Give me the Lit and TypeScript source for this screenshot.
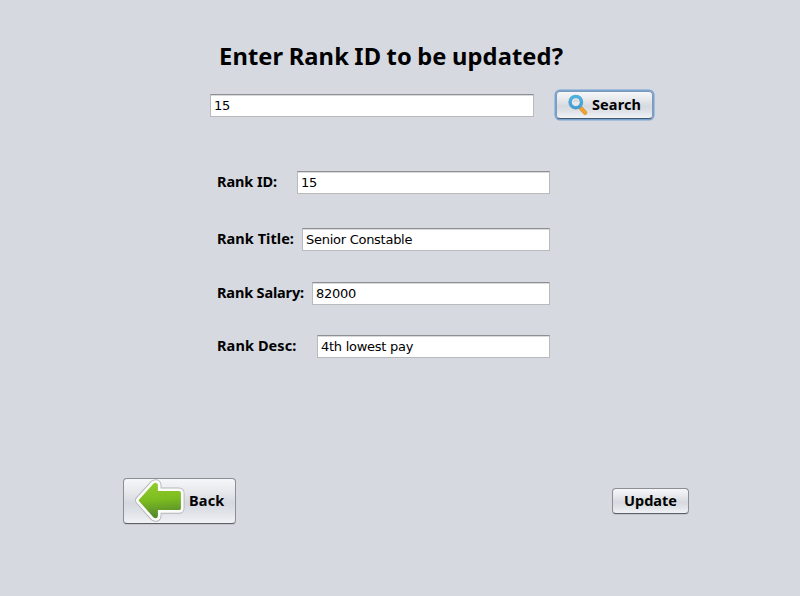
import { LitElement, html, css } from "lit";
import { customElement, property } from "lit/decorators.js";

const searchIcon = html`<svg class="icon" width="22" height="22" viewBox="0 0 22 22">
  <defs>
    <linearGradient id="ring" x1="0" y1="0" x2="0" y2="1">
      <stop offset="0" stop-color="#46b4e6" /><stop offset="1" stop-color="#3a9fd6" />
    </linearGradient>
  </defs>
  <path d="M13.8 14 L18.2 18.8" stroke="#c79350" stroke-width="4.2" stroke-linecap="round" />
  <path d="M13.8 14 L18.2 18.8" stroke="#f2a32a" stroke-width="3.3" stroke-linecap="round" />
  <path d="M12.2 12.3 L13.7 13.9" stroke="#8c8f94" stroke-width="2.6" />
  <circle cx="8.8" cy="8.1" r="5.7" fill="#e6e8ec" stroke="#8fa4b2" stroke-width="3.5" />
  <circle cx="8.8" cy="8.1" r="5.7" fill="none" stroke="url(#ring)" stroke-width="2.8" />
  <path d="M6.2 7.7 Q8.8 5.2 11.4 7.7" stroke="#cdd0d5" stroke-width="1.2" fill="none" />
</svg>`;

const arrow = "M4.6 21.3 L18.8 5.6 Q21.8 3.6 22 6.4 L22 13 L44 13 Q45 13 45 14 L45 29.2 Q45 30.2 44 30.2 L22 30.2 L22 36.6 Q21.8 39.4 18.8 37.4 Z";

const backIcon = html`<svg class="icon" width="50" height="44" viewBox="0 0 50 44">
  <defs>
    <linearGradient id="leaf" x1="0" y1="0" x2="0.1" y2="1">
      <stop offset="0" stop-color="#92cb2c" /><stop offset="0.5" stop-color="#7ebd20" /><stop offset="1" stop-color="#55892c" />
    </linearGradient>
  </defs>
  <g stroke-linejoin="round">
    <path d=${arrow} fill="#b4b6b8" stroke="#b4b6b8" stroke-width="9" />
    <path d=${arrow} fill="#fbfcfa" stroke="#fbfcfa" stroke-width="7.2" />
    <path d=${arrow} fill="url(#leaf)" stroke="url(#leaf)" stroke-width="1.8" />
  </g>
</svg>`;

@customElement("text-box")
class TextBox extends LitElement {
  @property() value = "";
  static styles = css`
    :host { display: block; height: 23px; }
    .box {
      box-sizing: border-box; width: 100%; height: 23px; padding: 0 3px;
      border: 1px solid #b9babc; border-top-color: #8e8f91; background: #fff;
      box-shadow: inset 0 1px 0 #d9dadc; outline: none; border-radius: 0;
      font: 13px/21px "DejaVu Sans", sans-serif; letter-spacing: -0.27px; color: #000; display: block;
    }
  `;
  render() {
    return html`<input class="box" .value=${this.value} />`;
  }
}

@customElement("app-root")
class AppRoot extends LitElement {
  static styles = css`
    :host {
      display: block; box-sizing: border-box; width: 800px; height: 596px; overflow: hidden;
      background: #d6d9e0; color: #000; padding-top: 38px;
      font-family: "Noto Sans", sans-serif; font-weight: 700; font-size: 14.5px;
    }
    .title { margin: 0 0 0 219px; height: 36px; line-height: 36px; font-size: 23.7px; letter-spacing: 0.12px; word-spacing: -0.9px; white-space: nowrap; }
    .lookup { display: flex; align-items: center; height: 30px; margin: 16px 0 0 210px; gap: 21px; }
    .lookup text-box { width: 324px; }
    .form { display: grid; grid-template-rows: 57px 54px 53px 23px; margin: 51px 0 0 217px; width: 333px; }
    .row { display: flex; height: 23px; }
    .label { flex: none; line-height: 21px; white-space: nowrap; }
    .row text-box { flex: 1; }
    .id .label { width: 80px; letter-spacing: -0.1px; }
    .rank .label { width: 85px; letter-spacing: 0.05px; }
    .salary .label { width: 95px; letter-spacing: -0.16px; }
    .desc .label { width: 100px; letter-spacing: 0.1px; }
    .actions { display: flex; justify-content: space-between; align-items: center; margin: 120px 111px 0 123px; height: 46px; }
    .btn {
      box-sizing: border-box; display: flex; align-items: center; padding: 0 0 1px;
      font: inherit; color: #000; white-space: nowrap;
      border: 1px solid #8b8e94; border-bottom-color: #5c5f65; border-radius: 4px;
      background: linear-gradient(#f6f7f9 0%, #e6e8ec 30%, #d6d9df 55%, #dfe2e7 75%, #f0f2f6 100%);
      box-shadow: 0 1px 0 #c3c6cd;
    }
    .btn span { padding-bottom: 1px; }
    .icon { flex: none; display: block; }
    .search { width: 97px; height: 28px; margin: 0 0 0 1px; padding-left: 10px; gap: 3px; letter-spacing: 0.1px; box-shadow: 0 0 0 1.5px #76a3d1; border-color: #7f99b8; border-bottom-color: #47586c; }
    .back { width: 113px; height: 46px; padding: 0 0 0 11px; gap: 4px; letter-spacing: 0.15px; }
    .back span { padding-bottom: 3px; }
    .update { width: 77px; height: 26px; padding-left: 11px; }
  `;
  render() {
    return html`
      <h1 class="title"><span>Enter Rank ID to be updated?</span></h1>
      <div class="lookup">
        <text-box value="15"></text-box>
        <button class="btn search">${searchIcon}<span>Search</span></button>
      </div>
      <div class="form">
        <div class="row id"><span class="label">Rank ID:</span><text-box value="15"></text-box></div>
        <div class="row rank"><span class="label">Rank Title:</span><text-box value="Senior Constable"></text-box></div>
        <div class="row salary"><span class="label">Rank Salary:</span><text-box value="82000"></text-box></div>
        <div class="row desc"><span class="label">Rank Desc:</span><text-box value="4th lowest pay"></text-box></div>
      </div>
      <div class="actions">
        <button class="btn back">${backIcon}<span>Back</span></button>
        <button class="btn update"><span>Update</span></button>
      </div>
    `;
  }
}
